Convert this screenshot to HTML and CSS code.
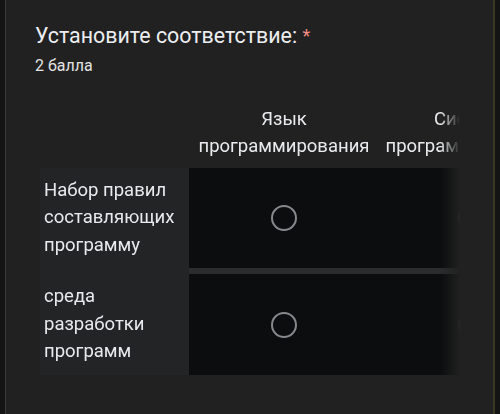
FILE: index.html
```html
<!DOCTYPE html>
<html lang="ru">
<head>
<meta charset="utf-8">
<link rel="stylesheet" href="styles.css">
</head>
<body>
<div class="card">
  <div class="title">Установите соответствие: <span class="req">*</span></div>
  <div class="points">2 балла</div>
  <div class="scroller">
    <div class="grid">
      <div class="head-label"></div>
      <div class="head">Язык<br>программирования</div>
      <div class="head">Система<br>программирования</div>

      <div class="label">Набор правил составляющих программу</div>
      <div class="cell"><span class="radio"></span></div>
      <div class="cell"><span class="radio"></span></div>

      <div class="sep-label"></div>
      <div class="sep"></div>
      <div class="sep"></div>

      <div class="label">среда разработки программ</div>
      <div class="cell"><span class="radio"></span></div>
      <div class="cell"><span class="radio"></span></div>
    </div>
  </div>
</div>
</body>
</html>
```
FILE: styles.css
```css
html, body {
  margin: 0;
  padding: 0;
  height: 100%;
  background: #141414;
}
body {
  padding: 0 5px 0 5px;
  box-sizing: border-box;
  font-family: Roboto, "Noto Sans", sans-serif;
  color: #e8eaed;
}
.card {
  box-sizing: border-box;
  height: 414px;
  background: #212121;
  border-left: 1px solid #3c3c3c;
  border-right: 2px solid #3a3920;
  padding: 22px 0 0 29px;
  overflow: hidden;
}
.title {
  font-size: 21.4px;
  line-height: 28px;
  color: #eceef0;
}
.req {
  color: #f28b82;
  font-size: 18px;
  vertical-align: top;
}
.points {
  margin-top: 6px;
  font-size: 16px;
  line-height: 20px;
  color: #e3e3e3;
}
.scroller {
  margin-top: 30px;
  margin-left: 5px;
  width: 422px;
  overflow: hidden;
  -webkit-mask-image: linear-gradient(to right, #000 400px, transparent 420px);
  mask-image: linear-gradient(to right, #000 400px, transparent 420px);
}
.grid {
  display: grid;
  grid-template-columns: 149px 190px 184px;
  grid-template-rows: auto 100px 6px 101px;
  width: 523px;
}
.head {
  font-size: 18.5px;
  line-height: 27px;
  text-align: center;
  padding-bottom: 8px;
  color: #e8eaed;
  white-space: nowrap;
}
.label {
  background: #222426;
  font-size: 18.5px;
  line-height: 27.5px;
  padding-left: 4px;
  padding-right: 6px;
  display: flex;
  align-items: center;
  color: #e8eaed;
}
.cell {
  background: #0b0d0e;
  display: flex;
  align-items: center;
  justify-content: center;
}
.sep-label {
  background: #222426;
}
.sep {
  background: #2a2c2e;
}
.radio {
  box-sizing: border-box;
  width: 26px;
  height: 26px;
  border: 2.5px solid #85898c;
  border-radius: 50%;
}
```
